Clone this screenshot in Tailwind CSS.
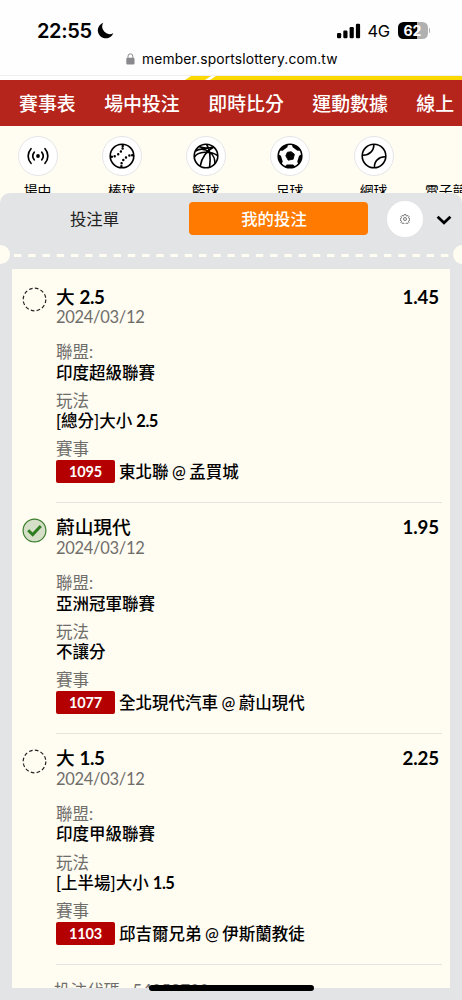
<!DOCTYPE html>
<html lang="zh-Hant">
<head>
<meta charset="utf-8">
<meta name="viewport" content="width=device-width, initial-scale=1">
<title>我的投注</title>
<script src="https://cdn.jsdelivr.net/npm/@tailwindcss/browser@4"></script>
</head>
<body class="bg-[#fffcf2]">
<div class="relative flex h-[1000px] w-[462px] flex-col overflow-hidden bg-[#fffcf2] font-['Lato','Noto_Sans_CJK_TC',sans-serif] text-black">

  <!-- Status bar and address -->
  <header class="flex h-[76px] shrink-0 flex-col border-b border-[#eeeeee] bg-[#fefefe] font-['Inter',sans-serif]">
    <div class="flex h-[46px] items-end justify-between pr-[32px] pl-[37px]">
      <div class="flex h-[31px] items-center gap-[5px]">
        <span class="text-[20px] leading-[30px] font-semibold tracking-[-0.35px]">22:55</span>
        <svg class="h-[17px] w-[17px]" viewBox="0 0 17 17"><path d="M6.2 .8A8 8 0 1 0 16.3 11.2A7.6 7.6 0 0 1 6.2 .8Z"/></svg>
      </div>
      <div class="flex h-[31px] items-center">
        <svg class="h-[16px] w-[24px]" viewBox="0 0 24 16"><rect x="0" y="10" width="4.2" height="5.2" rx="1.2"/><rect x="6.3" y="7.5" width="4.2" height="7.7" rx="1.2"/><rect x="12.6" y="4" width="4.2" height="11.2" rx="1.2"/><rect x="18.9" y="0.8" width="4.2" height="14.4" rx="1.2"/></svg>
        <span class="ml-[7px] w-[24px] text-[16.5px] leading-[30px] tracking-[-0.3px]">4G</span>
        <div class="ml-[6px] flex h-[17px] w-[30px] items-center justify-center rounded-[5.5px] bg-[linear-gradient(90deg,#000_62%,#b0b0b0_62%)] text-[14px] leading-[17px] font-bold text-white">62</div>
        <div class="ml-[1px] h-[5px] w-[1.5px] rounded-r bg-[#b0b0b0]"></div>
      </div>
    </div>
    <div class="flex h-[26px] items-center pl-[126px]">
      <svg class="h-[12px] w-[9px]" viewBox="0 0 9 12"><rect x=".3" y="4.8" width="8.2" height="6.7" rx="1.2" fill="#8a8a8e"/><path d="M2 5V3.2a2.4 2.4 0 0 1 4.8 0V5" fill="none" stroke="#8a8a8e" stroke-width="1"/></svg>
      <span class="ml-[7px] text-[13.8px] leading-[24px] tracking-[0.17px] whitespace-nowrap">member.sportslottery.com.tw</span>
    </div>
  </header>

  <svg class="h-[4px] w-[462px] shrink-0 bg-white" viewBox="0 0 462 4"><path d="M191 0h20l-6 4h-20ZM216 0H462V4H210Z" fill="#fbd800"/></svg>

  <nav class="flex h-[46px] shrink-0 items-center gap-[28.5px] overflow-hidden bg-[#b5251b] pt-[1px] pl-[19px] text-[18.9px] leading-[46px] font-medium whitespace-nowrap text-white">
    <span>賽事表</span><span>場中投注</span><span>即時比分</span><span>運動數據</span><span>線上</span>
  </nav>

  <!-- Sport categories -->
  <section class="flex h-[67px] shrink-0 overflow-hidden pt-[10px] text-[13.8px] whitespace-nowrap">
    <div class="flex w-[75px] shrink-0 flex-col items-center">
      <div class="flex size-[40px] shrink-0 items-center justify-center rounded-full border border-[#e5e5e8] bg-white">
        <svg class="size-[26px]" viewBox="0 0 26 26" fill="none" stroke="#000" stroke-width="1.7" stroke-linecap="round"><circle cx="13" cy="13" r="1.9" fill="#000" stroke="none"/><path d="M9.2 9.2A6.2 6.2 0 0 0 9.2 16.8M16.8 9.2A6.2 6.2 0 0 1 16.8 16.8M6 5.7A10.8 10.8 0 0 0 6 20.3M20 5.7A10.8 10.8 0 0 1 20 20.3"/></svg>
      </div>
      <span class="mt-[4px] leading-[22px]">場中</span>
    </div>
    <div class="ml-[9px] flex w-[75px] shrink-0 flex-col items-center">
      <div class="flex size-[40px] shrink-0 items-center justify-center rounded-full border border-[#e5e5e8] bg-white">
        <svg class="size-[26px]" viewBox="0 0 26 26" fill="none" stroke="#000"><circle cx="13" cy="13" r="11.8" stroke-width="1.6"/><path d="M13.6 5.4v.01M11.9 8.6v.01M9.2 11.3v.01M5.7 13.3v.01M2.8 13.7v.01M20.4 12.6v.01M17 14.5v.01M14.3 17v.01M12.6 20.3v.01M12.4 23.2v.01M13.7 2.9v.01M23.2 12.2v.01" stroke-width="2.5" stroke-linecap="round"/></svg>
      </div>
      <span class="mt-[4px] leading-[22px]">棒球</span>
    </div>
    <div class="ml-[9px] flex w-[75px] shrink-0 flex-col items-center">
      <div class="flex size-[40px] shrink-0 items-center justify-center rounded-full border border-[#e5e5e8] bg-white">
        <svg class="size-[26px]" viewBox="0 0 26 26" fill="none" stroke="#000" stroke-width="1.6"><circle cx="13" cy="13" r="11.8"/><path d="M6 3.6Q13 6.5 20.5 3.8M1.5 14C5 8.5 17 7.5 24.6 12.5M13.5 1.3Q18.5 9 16.6 24.2M20.8 4Q9.5 10 7.2 23.2M2.6 8.2Q9 3.4 17.2 9.5Q22 13.5 22 20.6"/></svg>
      </div>
      <span class="mt-[4px] leading-[22px]">籃球</span>
    </div>
    <div class="ml-[9px] flex w-[75px] shrink-0 flex-col items-center">
      <div class="flex size-[40px] shrink-0 items-center justify-center rounded-full border border-[#e5e5e8] bg-white">
        <svg class="size-[26px]" viewBox="0 0 26 26"><circle cx="13" cy="13" r="11.8" fill="none" stroke="#000" stroke-width="1.6"/><path d="M14.2 8.7L17.4 11.2L16.2 16.2L11.2 17.2L8.8 12.8L10.4 9.2Z" stroke="#000" stroke-width=".8" stroke-linejoin="round"/><g transform="rotate(36 13 13)"><path d="M7.5 2.2Q13 .2 18.5 2.2L16 4.4H10Z"/><path transform="rotate(72 13 13)" d="M7.5 2.2Q13 .2 18.5 2.2L16 4.4H10Z"/><path transform="rotate(144 13 13)" d="M7.5 2.2Q13 .2 18.5 2.2L16 4.4H10Z"/><path transform="rotate(216 13 13)" d="M7.5 2.2Q13 .2 18.5 2.2L16 4.4H10Z"/><path transform="rotate(288 13 13)" d="M7.5 2.2Q13 .2 18.5 2.2L16 4.4H10Z"/></g></svg>
      </div>
      <span class="mt-[4px] leading-[22px]">足球</span>
    </div>
    <div class="ml-[9px] flex w-[75px] shrink-0 flex-col items-center">
      <div class="flex size-[40px] shrink-0 items-center justify-center rounded-full border border-[#e5e5e8] bg-white">
        <svg class="size-[26px]" viewBox="0 0 26 26" fill="none" stroke="#000" stroke-width="1.6"><circle cx="13" cy="13" r="11.8"/><path d="M12.8 1.2C13.2 7.5 8.5 12.4 1.4 12.2M13.4 24.8C13 18.5 17.5 13.6 24.6 13.8"/></svg>
      </div>
      <span class="mt-[4px] leading-[22px]">網球</span>
    </div>
    <span class="mt-[44px] ml-[14px] shrink-0 leading-[22px]">電子競技</span>
  </section>

  <!-- Bet slip panel -->
  <main class="relative flex h-[807px] shrink-0 flex-col overflow-hidden rounded-t-[10px] bg-[#e3e4e6]">
    <div class="flex h-[51px] shrink-0 items-center">
      <div class="w-[189px] text-center text-[16.4px] leading-[34px] text-[#222]">投注單</div>
      <div class="flex h-[33px] w-[179px] items-center justify-center rounded-[4px] bg-[#ff7a00] pt-[1px] pr-[9px] text-[16.4px] font-medium text-white">我的投注</div>
      <div class="ml-[19px] flex size-[36px] items-center justify-center rounded-full bg-white">
        <svg class="size-[10px]" viewBox="0 0 20 20" fill="none" stroke="#555" stroke-width="1.6"><circle cx="10" cy="10" r="3"/><path d="M8.3 1.2h3.4l.6 2.2 1.5.7 2.1-1.2 2.3 2.4-1.1 2 .6 1.4 2.1.7v3.1l-2.2.7-.6 1.5 1.1 2-2.3 2.3-2-1.1-1.5.6-.6 2.3H8.3l-.6-2.3-1.5-.6-2 1.1-2.3-2.3 1.1-2-.6-1.5-2.1-.7V9.4l2.1-.7.6-1.4-1.1-2 2.3-2.4 2.1 1.2 1.3-.7Z" stroke-linejoin="round"/></svg>
      </div>
      <svg class="mt-[3px] ml-[13px] h-[10px] w-[16px]" viewBox="0 0 16 10" fill="none" stroke="#000" stroke-width="2.7"><path d="M1.6 1.8L8 7.8L14.4 1.8"/></svg>
    </div>
    <div class="flex h-[24.5px] shrink-0 items-start justify-between overflow-hidden">
      <div class="mt-[0.8px] -ml-[9.5px] size-[19px] shrink-0 rounded-full bg-[#fffcf2]"></div>
      <svg class="mt-[10px] h-[3px] w-[436px]" viewBox="0 0 436 3"><path d="M1 1.5H436" stroke="#fffcf2" stroke-width="2.8" stroke-dasharray="7.4 6.83"/></svg>
      <div class="mt-[0.8px] -mr-[9.5px] size-[19px] shrink-0 rounded-full bg-[#fffcf2]"></div>
    </div>

    <div class="mx-[12px] flex h-[719.5px] shrink-0 flex-col overflow-hidden bg-[#fffcf2] pt-[3.5px] text-[16.5px]">
      <article class="flex h-[231px] shrink-0 pt-[13px] pr-[8px] pl-[10px]">
        <svg class="mt-[2px] mr-[9px] size-[25px] shrink-0" viewBox="0 0 25 25"><circle cx="12.5" cy="12.5" r="11.3" fill="none" stroke="#222" stroke-width="1.2" stroke-dasharray="3.6 2.32"/></svg>
        <div class="flex flex-1 flex-col border-b border-[#e6e4de] whitespace-nowrap">
          <div class="flex h-[22px] items-center justify-between pt-[1px] pr-[3px] text-[18.7px] leading-[22px] font-medium"><span>大 <b class="font-bold tracking-[-0.3px]">2.5</b></span><span class="font-bold tracking-[-0.1px]">1.45</span></div>
          <div class="h-[18px] pt-[1px] leading-[18px] tracking-[-0.3px] text-[#6f6e6b]">2024/03/12</div>
          <div class="mt-[17px] h-[20px] leading-[20px] text-[#6f6e6b]">聯盟:</div>
          <div class="h-[20px] pt-[1px] leading-[20px] font-medium">印度超級聯賽</div>
          <div class="mt-[8px] h-[20px] pt-[1px] leading-[20px] text-[#6f6e6b]">玩法</div>
          <div class="h-[20px] pt-[1px] leading-[20px] font-medium">[總分]大小 <b class="font-bold tracking-[-0.5px]">2.5</b></div>
          <div class="mt-[9px] h-[20px] leading-[20px] text-[#6f6e6b]">賽事</div>
          <div class="mt-[1px] flex h-[23px] items-center font-medium"><span class="mr-[4px] w-[59px] rounded-[2px] bg-[#b40000] text-center text-[14.5px] leading-[23px] font-bold tracking-[-0.2px] text-white">1095</span><span class="pt-[1px] leading-[23px] [word-spacing:-0.7px]">東北聯 @ 孟買城</span></div>
        </div>
      </article>
      <article class="flex h-[231px] shrink-0 pt-[13px] pr-[8px] pl-[10px]">
        <svg class="mt-[2px] mr-[9px] size-[25px] shrink-0" viewBox="0 0 25 25"><circle cx="12.5" cy="12.5" r="11.4" fill="#d5dfc8" stroke="#3a7d2c" stroke-width="1.2"/><path d="M6.2 12.3L10.7 16.6L18.8 8" fill="none" stroke="#2f7d20" stroke-width="2.9"/></svg>
        <div class="flex flex-1 flex-col border-b border-[#e6e4de] whitespace-nowrap">
          <div class="flex h-[22px] items-center justify-between pr-[3px] text-[18.7px] leading-[22px] font-medium"><span>蔚山現代</span><span class="font-bold tracking-[-0.1px]">1.95</span></div>
          <div class="h-[18px] pt-[1px] leading-[18px] tracking-[-0.3px] text-[#6f6e6b]">2024/03/12</div>
          <div class="mt-[17px] h-[20px] leading-[20px] text-[#6f6e6b]">聯盟:</div>
          <div class="h-[20px] pt-[1px] leading-[20px] font-medium">亞洲冠軍聯賽</div>
          <div class="mt-[8px] h-[20px] pt-[1px] leading-[20px] text-[#6f6e6b]">玩法</div>
          <div class="h-[20px] pt-[1px] leading-[20px] font-medium">不讓分</div>
          <div class="mt-[9px] h-[20px] leading-[20px] text-[#6f6e6b]">賽事</div>
          <div class="mt-[1px] flex h-[23px] items-center font-medium"><span class="mr-[4px] w-[59px] rounded-[2px] bg-[#b40000] text-center text-[14.5px] leading-[23px] font-bold tracking-[-0.2px] text-white">1077</span><span class="pt-[1px] leading-[23px] [word-spacing:-0.7px]">全北現代汽車 @ 蔚山現代</span></div>
        </div>
      </article>
      <article class="flex h-[231px] shrink-0 pt-[13px] pr-[8px] pl-[10px]">
        <svg class="mt-[2px] mr-[9px] size-[25px] shrink-0" viewBox="0 0 25 25"><circle cx="12.5" cy="12.5" r="11.3" fill="none" stroke="#222" stroke-width="1.2" stroke-dasharray="3.6 2.32"/></svg>
        <div class="flex flex-1 flex-col border-b border-[#e6e4de] whitespace-nowrap">
          <div class="flex h-[22px] items-center justify-between pr-[3px] text-[18.7px] leading-[22px] font-medium"><span>大 <b class="font-bold tracking-[-0.3px]">1.5</b></span><span class="font-bold tracking-[-0.1px]">2.25</span></div>
          <div class="h-[18px] pt-[1px] leading-[18px] tracking-[-0.3px] text-[#6f6e6b]">2024/03/12</div>
          <div class="mt-[17px] h-[20px] leading-[20px] text-[#6f6e6b]">聯盟:</div>
          <div class="h-[20px] leading-[20px] font-medium">印度甲級聯賽</div>
          <div class="mt-[8px] h-[20px] pt-[1px] leading-[20px] text-[#6f6e6b]">玩法</div>
          <div class="h-[20px] pt-[1px] leading-[20px] font-medium">[上半場]大小 <b class="font-bold tracking-[-0.5px]">1.5</b></div>
          <div class="mt-[9px] h-[20px] leading-[20px] text-[#6f6e6b]">賽事</div>
          <div class="mt-[1px] flex h-[23px] items-center font-medium"><span class="mr-[4px] w-[59px] rounded-[2px] bg-[#b40000] text-center text-[14.5px] leading-[23px] font-bold tracking-[-0.2px] text-white">1103</span><span class="pt-[1px] leading-[23px] [word-spacing:-0.7px]">邱吉爾兄弟 @ 伊斯蘭教徒</span></div>
        </div>
      </article>
      <div class="mt-[14px] h-[24px] shrink-0 pl-[42px] leading-[24px] whitespace-nowrap text-[#6f6e6b]">投注代碼 : 54059700</div>
    </div>
    <div class="absolute bottom-[9.5px] left-[149px] h-[6px] w-[165px] rounded-full bg-black"></div>
  </main>
</div>
</body>
</html>
